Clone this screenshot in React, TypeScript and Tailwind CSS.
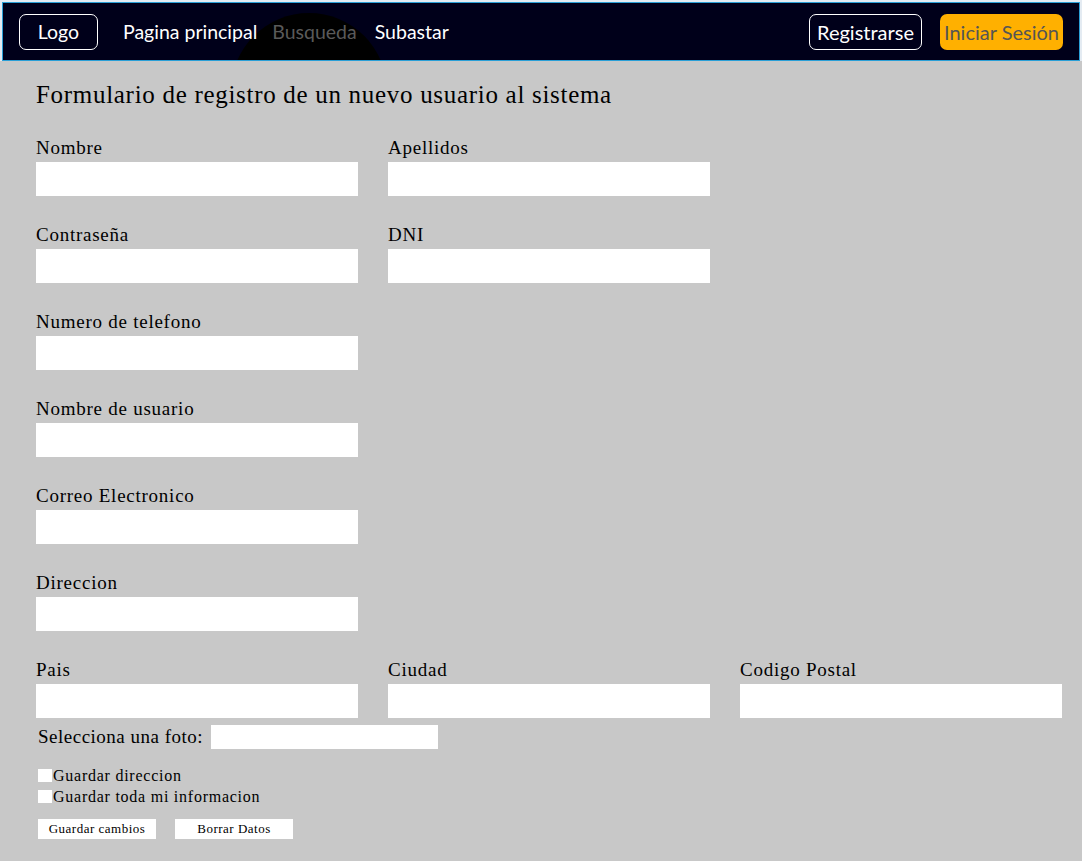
import React from "react";

const serif = { fontFamily: '"Liberation Serif", "Times New Roman", serif' };

function Field({ label, className = "" }: { label: string; className?: string }) {
  return (
    <div className={className}>
      <div className="h-[24px] text-[19px] leading-[24px] tracking-[0.75px] text-black">{label}</div>
      <div className="mt-[2px] h-[34px] w-[322px] bg-white" />
    </div>
  );
}

export default function App() {
  return (
    <div className="min-h-screen w-full bg-[#c8c8c8]" style={{ fontFamily: "Lato, sans-serif" }}>
      <div className="bg-[#e4ebf2] px-[2px] pt-[2px]">
        <nav className="relative flex h-[59px] items-center overflow-hidden border border-[#2a9fd6] bg-[#00001a] pl-[16px] pr-[16px]">
          <div className="pointer-events-none absolute left-[228px] top-[10px] h-[156px] w-[156px] rounded-full bg-black" />
          <div className="relative flex h-[36px] w-[79px] items-center justify-center rounded-[7px] border border-white text-[19.5px] text-white">
            Logo
          </div>
          <div className="relative ml-[25px] flex items-center text-[19.5px]">
            <span className="text-white">Pagina principal</span>
            <span className="ml-[15px] text-[#5a5a5a]">Busqueda</span>
            <span className="ml-[18px] text-white">Subastar</span>
          </div>
          <div className="relative ml-auto flex items-center gap-[18px]">
            <div className="flex h-[36px] w-[113px] items-center justify-center rounded-[7px] border border-white text-[20px] leading-[24px] text-white">
              Registrarse
            </div>
            <div className="flex h-[36px] w-[123px] items-center justify-center rounded-[7px] bg-[#ffb000] text-[20px] leading-[24px] text-[#555555]">
              Iniciar Sesión
            </div>
          </div>
        </nav>
      </div>

      <main className="pl-[36px] pt-[18px] text-black" style={serif}>
        <h1 className="h-[32px] text-[25px] leading-[32px] tracking-[0.7px]">
          Formulario de registro de un nuevo usuario al sistema
        </h1>

        <div className="mt-[25px] grid grid-cols-[322px_322px_322px] gap-x-[30px] gap-y-[27px]">
          <Field label="Nombre" />
          <Field label="Apellidos" />
          <div />
          <Field label="Contraseña" />
          <Field label="DNI" />
          <div />
          <Field label="Numero de telefono" />
          <div />
          <div />
          <Field label="Nombre de usuario" />
          <div />
          <div />
          <Field label="Correo Electronico" />
          <div />
          <div />
          <Field label="Direccion" />
          <div />
          <div />
          <Field label="Pais" />
          <Field label="Ciudad" />
          <Field label="Codigo Postal" />
        </div>

        <div className="mt-[7px] flex h-[24px] items-center pl-[2px]">
          <span className="text-[19px] leading-[24px] tracking-[0.5px]">Selecciona una foto:</span>
          <div className="ml-[8px] h-[24px] w-[227px] bg-white" />
        </div>

        <div className="mt-[16px] flex flex-col pl-[2px] text-[16px] leading-[21px] tracking-[0.75px]">
          <label className="flex items-center">
            <span className="h-[13px] w-[14px] bg-white" />
            <span className="ml-[1px]">Guardar direccion</span>
          </label>
          <label className="flex items-center">
            <span className="h-[13px] w-[14px] bg-white" />
            <span className="ml-[1px]">Guardar toda mi informacion</span>
          </label>
        </div>

        <div className="mt-[12px] flex gap-[19px] pl-[2px]">
          <div className="flex h-[20px] w-[118px] items-center justify-center bg-white text-[13px] tracking-[0.5px]">
            Guardar cambios
          </div>
          <div className="flex h-[20px] w-[118px] items-center justify-center bg-white text-[13px] tracking-[0.5px]">
            Borrar Datos
          </div>
        </div>
      </main>
    </div>
  );
}
